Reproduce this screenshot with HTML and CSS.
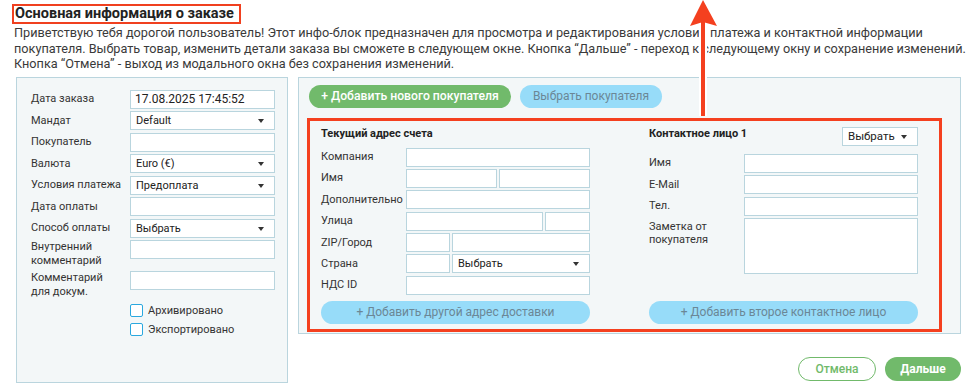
FILE: index.html
```html
<!DOCTYPE html>
<html lang="ru">
<head>
    <meta charset="UTF-8">
    <title>Основная информация о заказе</title>
    <link rel="stylesheet" href="styles.css">
</head>
<body>
    <div class="page">
        <h1 class="title"><span class="title-box">Основная информация о заказе</span></h1>
        <p class="intro">
            Приветствую тебя дорогой пользователь! Этот инфо-блок предназначен для просмотра и редактирования условий платежа и контактной информации<br>
            покупателя. Выбрать товар, изменить детали заказа вы сможете в следующем окне. Кнопка “Дальше” - переход к следующему окну и сохранение изменений.<br>
            Кнопка “Отмена” - выход из модального окна без сохранения изменений.
        </p>

        <div class="layout">
            <!-- Order details -->
            <div class="panel order-panel">
                <div class="form-grid">
                    <span class="label">Дата заказа</span>
                    <div class="field field-date">17.08.2025 17:45:52</div>

                    <span class="label">Мандат</span>
                    <div class="field select">Default</div>

                    <span class="label">Покупатель</span>
                    <div class="field"></div>

                    <span class="label">Валюта</span>
                    <div class="field select">Euro (€)</div>

                    <span class="label">Условия платежа</span>
                    <div class="field select">Предоплата</div>

                    <span class="label">Дата оплаты</span>
                    <div class="field"></div>

                    <span class="label">Способ оплаты</span>
                    <div class="field select">Выбрать</div>

                    <span class="label label-multi">Внутренний<br>комментарий</span>
                    <div class="field"></div>

                    <span class="label label-multi">Комментарий<br>для докум.</span>
                    <div class="field"></div>
                </div>
                <div class="checks">
                    <label class="check"><span class="check-box"></span>Архивировано</label>
                    <label class="check"><span class="check-box"></span>Экспортировано</label>
                </div>
            </div>

            <div class="main-col">
                <div class="panel customer-panel">
                    <div class="top-actions">
                        <button class="btn btn-green btn-add">+ Добавить нового покупателя</button>
                        <button class="btn btn-light btn-pick">Выбрать покупателя</button>
                    </div>

                    <div class="highlight">
                        <div class="address-col">
                            <div class="col-head">Текущий адрес счета</div>
                            <div class="addr-grid">
                                <span class="label">Компания</span>
                                <div class="field"></div>

                                <span class="label">Имя</span>
                                <div class="split split-half"><div class="field"></div><div class="field"></div></div>

                                <span class="label">Дополнительно</span>
                                <div class="field"></div>

                                <span class="label">Улица</span>
                                <div class="split split-street"><div class="field"></div><div class="field"></div></div>

                                <span class="label">ZIP/Город</span>
                                <div class="split split-zip"><div class="field"></div><div class="field"></div></div>

                                <span class="label">Страна</span>
                                <div class="split split-zip"><div class="field"></div><div class="field select">Выбрать</div></div>

                                <span class="label">НДС ID</span>
                                <div class="field"></div>
                            </div>
                            <button class="btn btn-light btn-wide">+ Добавить другой адрес доставки</button>
                        </div>

                        <div class="contact-col">
                            <div class="col-head contact-head">
                                <span>Контактное лицо 1</span>
                                <div class="field select contact-select">Выбрать</div>
                            </div>
                            <div class="contact-grid">
                                <span class="label">Имя</span>
                                <div class="field"></div>

                                <span class="label">E-Mail</span>
                                <div class="field"></div>

                                <span class="label">Тел.</span>
                                <div class="field"></div>

                                <span class="label label-multi">Заметка от<br>покупателя</span>
                                <div class="field field-note"></div>
                            </div>
                            <button class="btn btn-light btn-wide btn-bottom">+ Добавить второе контактное лицо</button>
                        </div>
                    </div>
                </div>

                <div class="footer">
                    <button class="btn btn-outline">Отмена</button>
                    <button class="btn btn-green btn-next">Дальше</button>
                </div>
            </div>
        </div>

        <!-- annotation arrow -->
        <svg class="arrow" width="30" height="120" viewBox="0 0 30 120">
            <line x1="15" y1="116" x2="15" y2="20" stroke="#ffffff" stroke-width="8"/>
            <line x1="15" y1="116" x2="15" y2="20" stroke="#f4401f" stroke-width="4"/>
            <polygon points="2,26 15,0 29,26 15,22" fill="#f4401f"/>
        </svg>
    </div>
</body>
</html>
```

FILE: styles.css
```css
/* Reset */
html, body {
    margin: 0;
    padding: 0;
    background-color: #ffffff;
    font-family: Roboto, 'Liberation Sans', sans-serif;
    color: #333333;
}
.page {
    position: relative;
    width: 976px;
    height: 392px;
    box-sizing: border-box;
    padding: 4px 0 0 14px;
    overflow: hidden;
}
/* Heading with red highlight */
.title {
    margin: 0 0 0 -2px;
    font-size: 14.5px;
    line-height: 16px;
    font-weight: bold;
    color: #222222;
}
.title-box {
    display: inline-block;
    border: 2px solid #f0401f;
    padding: 0 5px 0 1px;
}
.intro {
    margin: 1px 0 0;
    font-size: 12.7px;
    line-height: 15.5px;
    color: #3a3a3a;
    white-space: nowrap;
}
.layout {
    display: flex;
    align-items: flex-start;
    gap: 10px;
    margin-top: 5px;
    margin-left: 2px;
}
.panel {
    background-color: #f3f7f8;
    border: 1px solid #bad5de;
    box-sizing: border-box;
}
/* Left panel */
.order-panel {
    width: 272px;
    height: 306px;
    padding: 12px 12px 0 14px;
}
.form-grid {
    display: grid;
    grid-template-columns: 99px 145px;
    row-gap: 2.5px;
    align-items: center;
}
.label {
    font-size: 11px;
    line-height: 14px;
    color: #333333;
    white-space: nowrap;
}
.label-multi {
    align-self: start;
}
.field {
    position: relative;
    height: 19px;
    box-sizing: border-box;
    background-color: #ffffff;
    border: 1px solid #b9d5de;
    font-size: 11px;
    line-height: 17px;
    padding-left: 5px;
    color: #222222;
}
.field-date {
    font-size: 12px;
    padding-left: 4px;
}
.form-grid .label-multi + .field {
    align-self: start;
}
/* dropdown caret */
.select::after {
    content: "";
    position: absolute;
    right: 10px;
    top: 7px;
    border-left: 3.5px solid transparent;
    border-right: 3.5px solid transparent;
    border-top: 4px solid #333333;
}
.checks {
    display: flex;
    flex-direction: column;
    gap: 6px;
    margin: 5px 0 0 99px;
}
.check {
    display: flex;
    align-items: center;
    gap: 5px;
    font-size: 11px;
    line-height: 13px;
    color: #333333;
}
.check-box {
    width: 13px;
    height: 13px;
    box-sizing: border-box;
    border: 1px solid #2aa8df;
    border-radius: 2px;
    background-color: #ffffff;
}
/* Right column */
.main-col {
    width: 663px;
}
.customer-panel {
    padding: 7px 18px 1px 8px;
}
.top-actions {
    display: flex;
    gap: 9px;
    margin-left: 2px;
}
.btn {
    height: 23px;
    border: none;
    border-radius: 12px;
    font-family: Roboto, 'Liberation Sans', sans-serif;
    font-size: 12px;
    padding: 0;
    cursor: pointer;
}
.btn-green {
    background-color: #71ba6b;
    color: #ffffff;
    font-weight: 500;
}
.btn-light {
    background-color: #97dcf9;
    color: #6b8796;
}
.btn-add {
    width: 202px;
    font-size: 12.2px;
}
.btn-pick {
    width: 142px;
}
/* Red highlight frame */
.highlight {
    display: flex;
    gap: 59px;
    margin-top: 10px;
    border: 3px solid #f4401f;
    padding: 6px 21px 5px 11px;
}
.address-col,
.contact-col {
    width: 269px;
    display: flex;
    flex-direction: column;
}
.col-head {
    height: 19px;
    font-size: 11px;
    line-height: 14px;
    font-weight: bold;
    color: #222222;
}
.addr-grid {
    display: grid;
    grid-template-columns: 85px 184px;
    row-gap: 2.4px;
    align-items: center;
    margin-top: 2px;
}
.split {
    display: grid;
    gap: 2px;
}
.split-half {
    grid-template-columns: 91px 91px;
}
.split-street {
    grid-template-columns: 137px 45px;
}
.split-zip {
    grid-template-columns: 44px 138px;
}
.btn-wide {
    width: 269px;
    margin-top: 6px;
}
.contact-head {
    display: flex;
    justify-content: space-between;
}
.contact-select {
    width: 76px;
    font-weight: normal;
    font-size: 11.5px;
    padding-left: 5px;
}
.contact-grid {
    display: grid;
    grid-template-columns: 95px 174px;
    row-gap: 2.5px;
    align-items: center;
    margin-top: 8px;
}
.contact-grid .label-multi {
    padding-top: 3px;
    line-height: 12.5px;
}
.field-note {
    height: 56px;
}
.btn-bottom {
    margin-top: auto;
}
/* Footer */
.footer {
    display: flex;
    justify-content: flex-end;
    gap: 9px;
    margin-top: 23px;
}
.btn-outline {
    width: 78px;
    height: 24px;
    background-color: #ffffff;
    border: 1px solid #71ba6b;
    color: #71ba6b;
    font-weight: 500;
}
.btn-next {
    width: 76px;
    height: 24px;
    font-weight: bold;
}
/* Annotation arrow */
.arrow {
    position: absolute;
    left: 688px;
    top: 0;
}
```
